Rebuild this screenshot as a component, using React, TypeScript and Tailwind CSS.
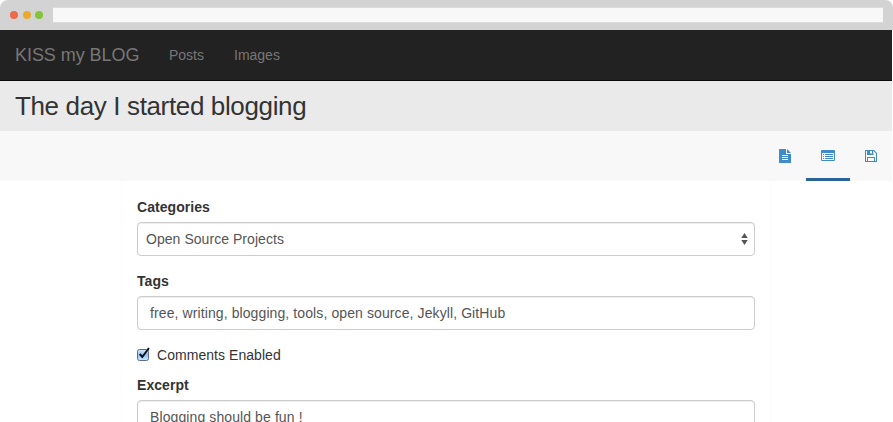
import type { ReactNode } from 'react';

function BrowserBar() {
  return (
    <div className="flex h-[30px] items-center rounded-t-[8px] bg-[#d3d3d3] pr-[10px] pl-[10px]">
      <div className="flex w-[43px] shrink-0 gap-[4.5px]">
        <span className="size-2 rounded-full bg-[#ed6b4c]" />
        <span className="size-2 rounded-full bg-[#e8a92f]" />
        <span className="size-2 rounded-full bg-[#82c53b]" />
      </div>
      <div className="h-4 flex-1 border-y border-[#dcdcdc] bg-[#f8f8f8]" />
    </div>
  );
}

function DocumentIcon() {
  return (
    <svg width="12" height="14" viewBox="0 0 12 14" fill="#428bca">
      <path fillRule="evenodd" d="M.5 0H7v5h5v8.5a.5.5 0 0 1-.5.5H.5a.5.5 0 0 1-.5-.5V.5A.5.5 0 0 1 .5 0ZM3 6v1h6V6Zm0 2v1h6V8Zm0 2v1h6v-1Z" />
      <path d="M8 0l4 4H8Z" />
    </svg>
  );
}

function ListIcon() {
  return (
    <svg width="14" height="12" viewBox="0 0 14 12" fill="#428bca">
      <path fillRule="evenodd" d="M1 0h12a1 1 0 0 1 1 1v9a1 1 0 0 1-1 1H1a1 1 0 0 1-1-1V1a1 1 0 0 1 1-1ZM1 3v7h12V3Z" />
      <path d="M2 4h1v1H2Zm2 0h8v1H4ZM2 6h1v1H2Zm2 0h8v1H4ZM2 8h1v1H2Zm2 0h8v1H4Z" />
    </svg>
  );
}

function SaveIcon() {
  return (
    <svg width="12" height="12" viewBox="0 0 12 12" fill="#428bca">
      <path fillRule="evenodd" d="M.5 0H9l3 3v8.500a.5.5 0 0 1-.5.5H.5a.5.5 0 0 1-.5-.5V.5A.5.5 0 0 1 .5 0ZM1 1v10h1V7h8v4h1V3.500L8.500 1v4H2V1Zm2 7v3h6V8Z" />
      <path fill="#f8f8f8" d="M5 1h2v2.500H5ZM8 1h.5v3H8Z" />
    </svg>
  );
}

function Tab({ active, children }: { active?: boolean; children: ReactNode }) {
  return (
    <button className={`flex h-[50px] items-center justify-center border-b-[3px] pt-[3px] ${active ? 'w-11 border-[#2a6496]' : 'w-[42px] border-transparent'}`}>
      {children}
    </button>
  );
}

function Label({ children }: { children: ReactNode }) {
  return <div className="h-5 text-[14px] leading-5 font-bold tracking-[0.06px] text-[#333]">{children}</div>;
}

const box = 'flex h-[34px] items-center rounded-[4px] border border-[#ccc] shadow-[inset_0_1px_1px_rgba(0,0,0,0.075)] text-[14px] text-[#555]';

export default function App() {
  return (
    <div className="h-[422px] w-[893px] overflow-hidden bg-white font-['Liberation_Sans',Arial,sans-serif]">
      <BrowserBar />
      <div className="w-[892px]">
        <nav className="flex h-[51px] items-center border-b border-[#080808] bg-[#222] pl-[15px] text-[14px] text-[#777]">
          <span className="w-[154px] text-[18px] tracking-[-0.05px] whitespace-nowrap">KISS my BLOG</span>
          <span className="w-[65px]">Posts</span>
          <span>Images</span>
        </nav>
        <header className="flex h-[50px] items-center bg-[#eaeaea] pl-[15px]">
          <h1 className="text-[26px] leading-[50px] tracking-[-0.36px] whitespace-nowrap text-[#333]">The day I started blogging</h1>
        </header>
        <div className="flex h-[50px] justify-end bg-[#f8f8f8]">
          <Tab><DocumentIcon /></Tab>
          <Tab active><ListIcon /></Tab>
          <Tab><SaveIcon /></Tab>
        </div>
        <form className="mx-auto h-[241px] w-[650px] border-x border-[#fbfbfb] px-[15px] pt-4">
          <Label>Categories</Label>
          <div className={`${box} mt-[5px] justify-between pr-[6px] pl-2`}>
            <span className="tracking-[0.05px]">Open Source Projects</span>
            <svg width="7" height="12" viewBox="0 0 7 12" fill="#555"><path d="M3.500 0L6.700 5H.3ZM.3 7H6.700L3.500 12Z" /></svg>
          </div>
          <div className="mt-[15px]"><Label>Tags</Label></div>
          <div className={`${box} mt-[5px] pl-3`}>
            <span className="tracking-[0.1px]">free, writing, blogging, tools, open source, Jekyll, GitHub</span>
          </div>
          <div className="mt-[15px] flex h-5 items-center text-[14px] text-[#333]">
            <svg className="mr-[7px] overflow-visible" width="13" height="14" viewBox="0 0 13 14">
              <defs>
                <linearGradient id="check" x1="0" y1="0" x2="0" y2="1">
                  <stop offset="0" stopColor="#d9e9f8" />
                  <stop offset=".5" stopColor="#93c2ee" />
                  <stop offset="1" stopColor="#c8eaff" />
                </linearGradient>
              </defs>
              <rect x=".5" y="1.500" width="11" height="11" rx="2" fill="url(#check)" stroke="#5d6a94" />
              <path d="M2.800 6L5.300 9L12 0" fill="none" stroke="#0b1020" strokeWidth="2" />
            </svg>
            <span className="tracking-[0.05px]">Comments Enabled</span>
          </div>
          <div className="mt-[10px]"><Label>Excerpt</Label></div>
          <div className={`${box} mt-[5px] pl-3`}>
            <span className="tracking-[0.1px]">Blogging should be fun !</span>
          </div>
        </form>
      </div>
    </div>
  );
}
